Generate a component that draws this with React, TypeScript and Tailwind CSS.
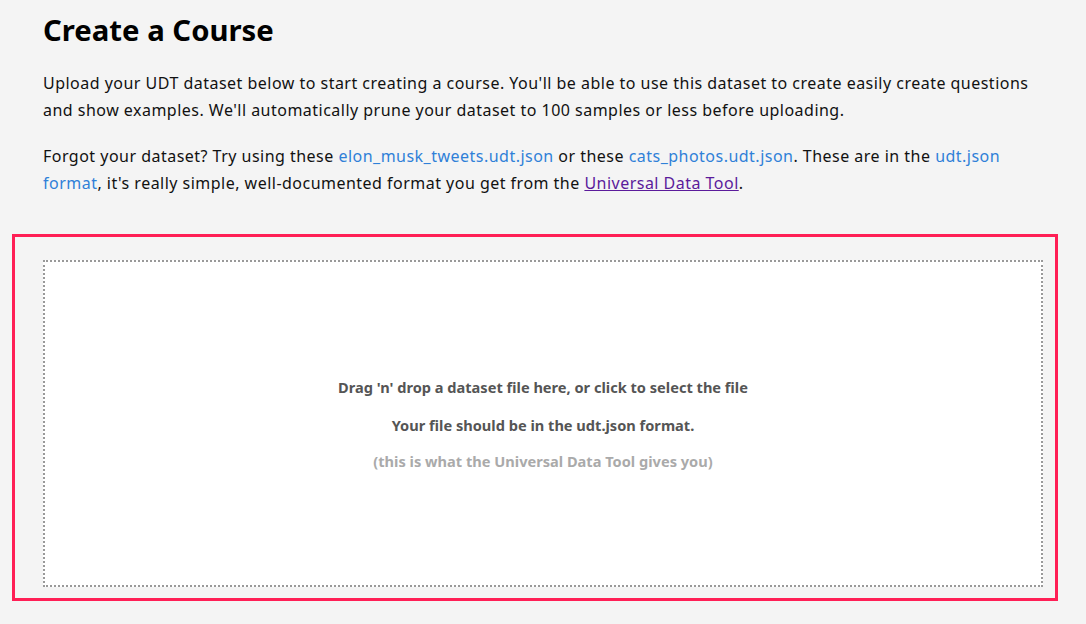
export default function App() {
  return (
    <div className="min-h-[624px] w-full bg-[#f4f4f4] text-[#111]" style={{ fontFamily: "'Noto Sans', sans-serif" }}>
      <div className="px-[43px] pt-[10px]">
        <h1 className="text-[29.3px] font-bold leading-[40px] text-black">Create a Course</h1>
        <p className="mt-[20px] text-[16px] leading-[27px] tracking-[0.48px]">
          Upload your UDT dataset below to start creating a course. You'll be able to use this dataset to create easily create questions and show examples. We'll automatically prune your dataset to 100 samples or less before uploading.
        </p>
        <p className="mt-[19px] text-[16px] leading-[27px] tracking-[0.48px]">
          Forgot your dataset? Try using these <a className="text-[#2f80d8]">elon_musk_tweets.udt.json</a> or these{" "}
          <a className="text-[#2f80d8]">cats_photos.udt.json</a>. These are in the <a className="text-[#2f80d8]">udt.json format</a>, it's really simple, well-documented format you get from the{" "}
          <a className="text-[#5b1b9b] underline">Universal Data Tool</a>.
        </p>
      </div>
      <div className="mx-[12px] mt-[37px] w-[1046px] border-[3px] border-[#ff1f55] pl-[28px] pr-[12px] pt-[23px] pb-[11px]">
        <div className="flex h-[327px] flex-col items-center justify-center border-2 border-dotted border-[#999] bg-white pt-[3px] text-[14.6px] font-bold">
          <div className="text-[#555]">Drag 'n' drop a dataset file here, or click to select the file</div>
          <div className="mt-[16px] text-[#555]">Your file should be in the udt.json format.</div>
          <div className="mt-[14px] text-[#aaa]">(this is what the Universal Data Tool gives you)</div>
        </div>
      </div>
    </div>
  );
}
